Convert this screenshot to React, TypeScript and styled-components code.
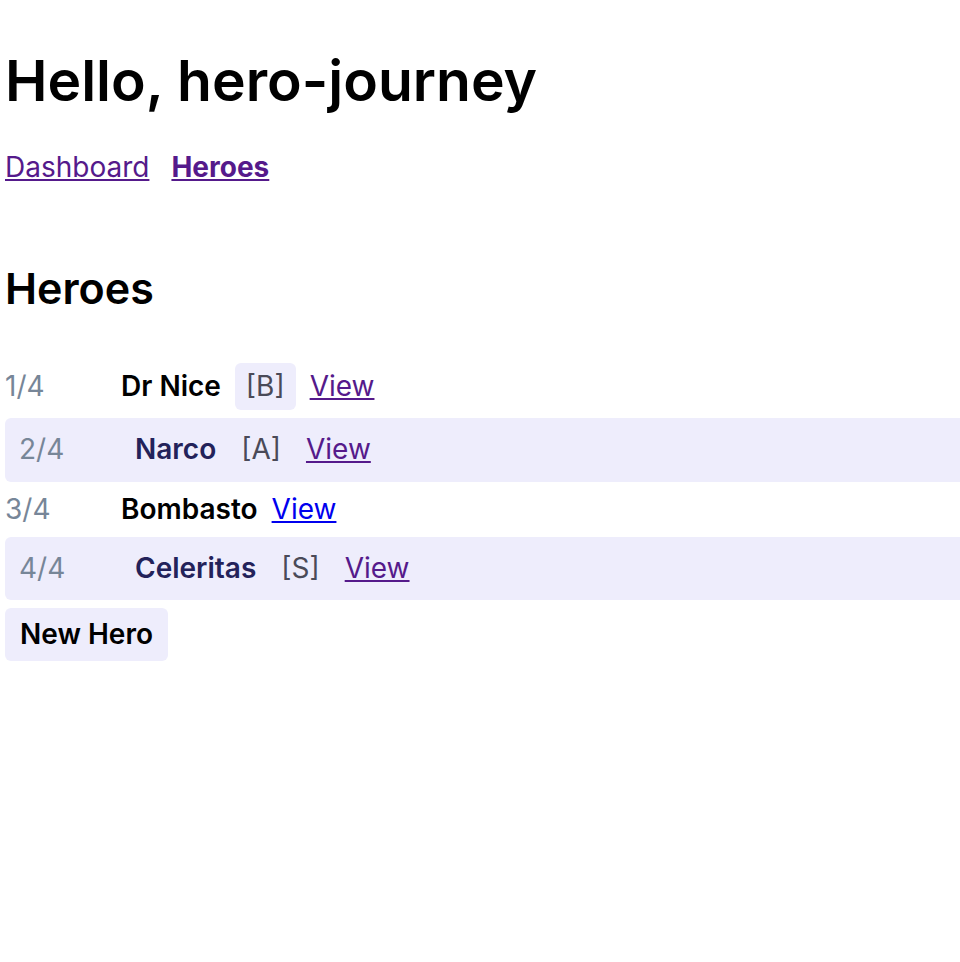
import React from "react";
import styled, { createGlobalStyle } from "styled-components";

interface Hero {
  id: number;
  name: string;
  rank?: string;
  selected?: boolean;
  visited?: boolean;
}

const heroes: Hero[] = [
  { id: 1, name: "Dr Nice", rank: "B", visited: true },
  { id: 2, name: "Narco", rank: "A", selected: true, visited: true },
  { id: 3, name: "Bombasto" },
  { id: 4, name: "Celeritas", rank: "S", selected: true, visited: true },
];

const App: React.FC = () => {
  return (
    <Page>
      <GlobalStyle />
      <Title>Hello, hero-journey</Title>
      <Nav>
        <NavLink href="#dashboard">Dashboard</NavLink>
        <NavLink href="#heroes" active>
          Heroes
        </NavLink>
      </Nav>

      <Section>
        <SubTitle>Heroes</SubTitle>
        <HeroList>
          {heroes.map((hero) => (
            <HeroRow key={hero.id} selected={!!hero.selected}>
              <Index>
                {hero.id}/{heroes.length}
              </Index>
              <Name selected={!!hero.selected}>{hero.name}</Name>
              {hero.rank && (
                <Rank selected={!!hero.selected}>[{hero.rank}]</Rank>
              )}
              <ViewLink href={`#hero-${hero.id}`} visited={!!hero.visited}>
                View
              </ViewLink>
            </HeroRow>
          ))}
        </HeroList>
        <NewButton type="button">New Hero</NewButton>
      </Section>
    </Page>
  );
};

const GlobalStyle = createGlobalStyle`
  html, body {
    margin: 0;
    padding: 0;
    background: #ffffff;
    overflow-x: hidden;
  }
  body {
    font-family: Inter, "Liberation Sans", Arial, sans-serif;
    font-size: 28px;
    line-height: 1.4;
    color: #000;
  }
`;

const Page = styled.div`
  padding: 0 0 40px 5px;
`;

const Title = styled.h1`
  margin: 0;
  padding-top: 47px;
  font-size: 57px;
  font-weight: 600;
  line-height: 1.2;
`;

const Nav = styled.nav`
  display: flex;
  gap: 22px;
  margin-top: 33px;
`;

const NavLink = styled.a<{ active?: boolean }>`
  color: #551a8b;
  font-weight: ${(p) => (p.active ? 700 : 400)};
  text-decoration: underline;
`;

const Section = styled.section`
  margin-top: 75px;
`;

const SubTitle = styled.h2`
  margin: 0 0 49px;
  font-size: 43px;
  font-weight: 600;
  line-height: 1.2;
`;

const HeroList = styled.ul`
  list-style: none;
  margin: 0;
  padding: 0;
  display: flex;
  flex-direction: column;
  gap: 8px;
`;

const HeroRow = styled.li<{ selected: boolean }>`
  display: flex;
  align-items: center;
  gap: 14px;
  margin-right: -12px;
  padding: ${(p) => (p.selected ? "8px 14px" : "0")};
  background: ${(p) => (p.selected ? "#eeedfc" : "transparent")};
  border-radius: 6px;
`;

const Index = styled.span`
  width: 102px;
  color: #778698;
`;

const Name = styled.span<{ selected: boolean }>`
  font-weight: 600;
  color: ${(p) => (p.selected ? "#23225a" : "#000")};
`;

const Rank = styled.span<{ selected: boolean }>`
  padding: 4px 11px;
  border-radius: 6px;
  background: ${(p) => (p.selected ? "transparent" : "#eeedfc")};
  color: #4a4a58;
`;

const ViewLink = styled.a<{ visited: boolean }>`
  color: ${(p) => (p.visited ? "#551a8b" : "#0000ee")};
  text-decoration: underline;
`;

const NewButton = styled.button`
  margin-top: 8px;
  padding: 7px 15px;
  border: none;
  border-radius: 6px;
  background: #eeedfc;
  color: #000;
  font-family: inherit;
  font-size: 28px;
  font-weight: 600;
  line-height: 1.4;
  cursor: pointer;
`;

export default App;
